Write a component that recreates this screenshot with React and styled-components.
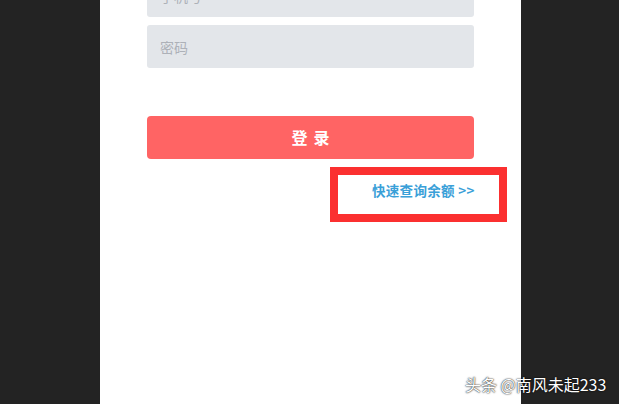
import React from 'react';
import styled, { createGlobalStyle } from 'styled-components';

const GlobalStyle = createGlobalStyle`
  html, body {
    margin: 0;
    padding: 0;
    background: #232323;
    font-family: "Noto Sans CJK SC", "Noto Sans", sans-serif;
  }
`;

const Page = styled.div`
  position: relative;
  width: 619px;
  height: 404px;
  overflow: hidden;
  background: #232323;
  padding-left: 100px;
  box-sizing: border-box;
`;

const Panel = styled.div`
  width: 421px;
  height: 404px;
  background: #ffffff;
  box-sizing: border-box;
  padding-left: 47px;
  display: flex;
  flex-direction: column;
`;

const Form = styled.div`
  width: 327px;
  margin-top: -26px;
  display: flex;
  flex-direction: column;
`;

const Field = styled.div`
  height: 43px;
  margin-bottom: 8px;
  background: #e3e6ea;
  border-radius: 3px;
  display: flex;
  align-items: center;
  padding-left: 13px;
  font-size: 14px;
  color: #adb1b8;
`;

const LoginButton = styled.div`
  height: 43px;
  margin-top: 40px;
  background: #ff6464;
  border-radius: 4px;
  display: flex;
  align-items: center;
  justify-content: center;
  color: #ffffff;
  font-size: 16px;
  font-weight: 700;
  letter-spacing: 6px;
  text-indent: 6px;
  padding-bottom: 2px;
  box-sizing: border-box;
`;

const QuickBox = styled.div`
  margin-top: 8px;
  margin-left: 183px;
  width: 177px;
  height: 55px;
  box-sizing: border-box;
  border: 8px solid #fb3030;
  display: flex;
  align-items: center;
  padding-left: 34px;
  padding-bottom: 10px;
`;

const QuickLink = styled.span`
  color: #3aa0d8;
  font-size: 13.5px;
  font-weight: 700;
  letter-spacing: 0.3px;
  white-space: nowrap;
`;

const Watermark = styled.div`
  position: absolute;
  left: 465px;
  top: 372px;
  color: #ffffff;
  font-size: 16px;
  white-space: nowrap;
  text-shadow: 0 0 2px rgba(0, 0, 0, 0.8), 0 0 1px rgba(0, 0, 0, 0.8);
`;

export default function App() {
  return (
    <>
      <GlobalStyle />
      <Page>
        <Panel>
          <Form>
            <Field>手机号</Field>
            <Field>密码</Field>
            <LoginButton>登录</LoginButton>
          </Form>
          <QuickBox>
            <QuickLink>快速查询余额 &gt;&gt;</QuickLink>
          </QuickBox>
        </Panel>
        <Watermark>头条 @南风未起233</Watermark>
      </Page>
    </>
  );
}
